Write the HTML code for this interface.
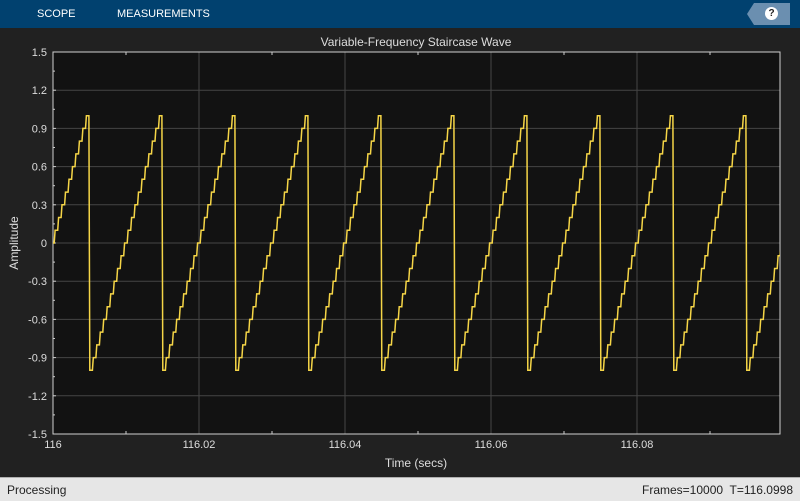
<!DOCTYPE html>
<html><head><meta charset="utf-8"><style>
body{margin:0;width:800px;height:500px;overflow:hidden;background:#212121;font-family:"Liberation Sans",Arial,sans-serif;position:relative}
.tb{position:absolute;left:0;top:0;width:800px;height:28px;background:#01416f}
.tb span{position:absolute;top:8px;color:#fff;font-size:11px}
.help{position:absolute;left:754px;top:3px;width:36px;height:22px;background:#6b8fb0}
.help:before{content:"";position:absolute;left:-7px;top:0;border-right:7px solid #6b8fb0;border-top:11px solid transparent;border-bottom:11px solid transparent}
.help i{position:absolute;left:11px;top:4px;width:13px;height:13px;border-radius:50%;background:#fff;color:#222;font:bold 10px "Liberation Sans",sans-serif;text-align:center;line-height:13px;font-style:normal}
.sb{position:absolute;left:0;top:477px;width:800px;height:23px;background:#e6e6e6;border-top:1px solid #b0b0b0;font-size:12px;color:#222}
</style></head><body>
<div class="tb"><span style="left:37px">SCOPE</span><span style="left:117px">MEASUREMENTS</span><div class="help"><i>?</i></div></div>
<svg id="s" width="800" height="500" style="position:absolute;left:0;top:0" xmlns="http://www.w3.org/2000/svg"></svg>
<div class="sb"><span style="position:absolute;left:7px;top:5px">Processing</span><span style="position:absolute;right:7px;top:5px">Frames=10000&nbsp; T=116.0998</span></div>
<script>
var L=53,T=52,R=780,B=434,h='';
h+='<rect x="'+L+'" y="'+T+'" width="'+(R-L)+'" height="'+(B-T)+'" fill="#121212"/>';
function Y(v){return 243-v*127.33;}
for(var i=-5;i<=5;i++){var y=Y(i*0.3);h+='<line x1="'+L+'" x2="'+R+'" y1="'+y+'" y2="'+y+'" stroke="#454545"/>';
h+='<text x="47" y="'+(y+4)+'" fill="#ddd" font-size="11" text-anchor="end">'+(i==0?'0':(i*0.3).toFixed(1))+'</text>';
h+='<line x1="'+L+'" x2="'+(L+3)+'" y1="'+y+'" y2="'+y+'" stroke="#ccc"/>';
if(i<5){var ym=Y(i*0.3+0.15);h+='<line x1="'+L+'" x2="'+(L+2)+'" y1="'+ym+'" y2="'+ym+'" stroke="#ccc"/>';}}
var xl=['116','116.02','116.04','116.06','116.08'];
for(var k=0;k<5;k++){var x=L+k*146;h+='<line x1="'+x+'" x2="'+x+'" y1="'+T+'" y2="'+B+'" stroke="#454545"/>';
h+='<text x="'+x+'" y="448" fill="#ddd" font-size="11" text-anchor="middle">'+xl[k]+'</text>';
h+='<line x1="'+(x+73)+'" x2="'+(x+73)+'" y1="'+B+'" y2="'+(B-3)+'" stroke="#ccc"/><line x1="'+(x+73)+'" x2="'+(x+73)+'" y1="'+T+'" y2="'+(T+3)+'" stroke="#ccc"/>';}
h+='<rect x="'+L+'" y="'+T+'" width="'+(R-L)+'" height="'+(B-T)+'" fill="none" stroke="#d0d0d0"/>';
var p='',st=73/21,x0=53-10*st-2.3;
for(var c=0;c<12;c++){for(var j=0;j<21;j++){var xs=x0+c*73+j*st,v=-1+j*0.1;var a=xs+0.9,b=xs+st;
if(b<L||a>R+4)continue;p+=(p?'L':'M')+Math.max(a,L).toFixed(1)+' '+Y(v).toFixed(1)+'L'+Math.min(b,R).toFixed(1)+' '+Y(v).toFixed(1);}}
h+='<clipPath id="c"><rect x="'+L+'" y="'+T+'" width="'+(R-L)+'" height="'+(B-T)+'"/></clipPath>';
h+='<path d="'+p+'" fill="none" stroke="#f5d547" stroke-width="1.5" clip-path="url(#c)"/>';
h+='<text x="416" y="46" fill="#ddd" font-size="12" text-anchor="middle">Variable-Frequency Staircase Wave</text>';
h+='<text x="416" y="467" fill="#ddd" font-size="12" text-anchor="middle">Time (secs)</text>';
h+='<text x="18" y="243" fill="#ddd" font-size="12" text-anchor="middle" transform="rotate(-90 18 243)">Amplitude</text>';
document.getElementById('s').innerHTML=h;
</script>
</body></html>
